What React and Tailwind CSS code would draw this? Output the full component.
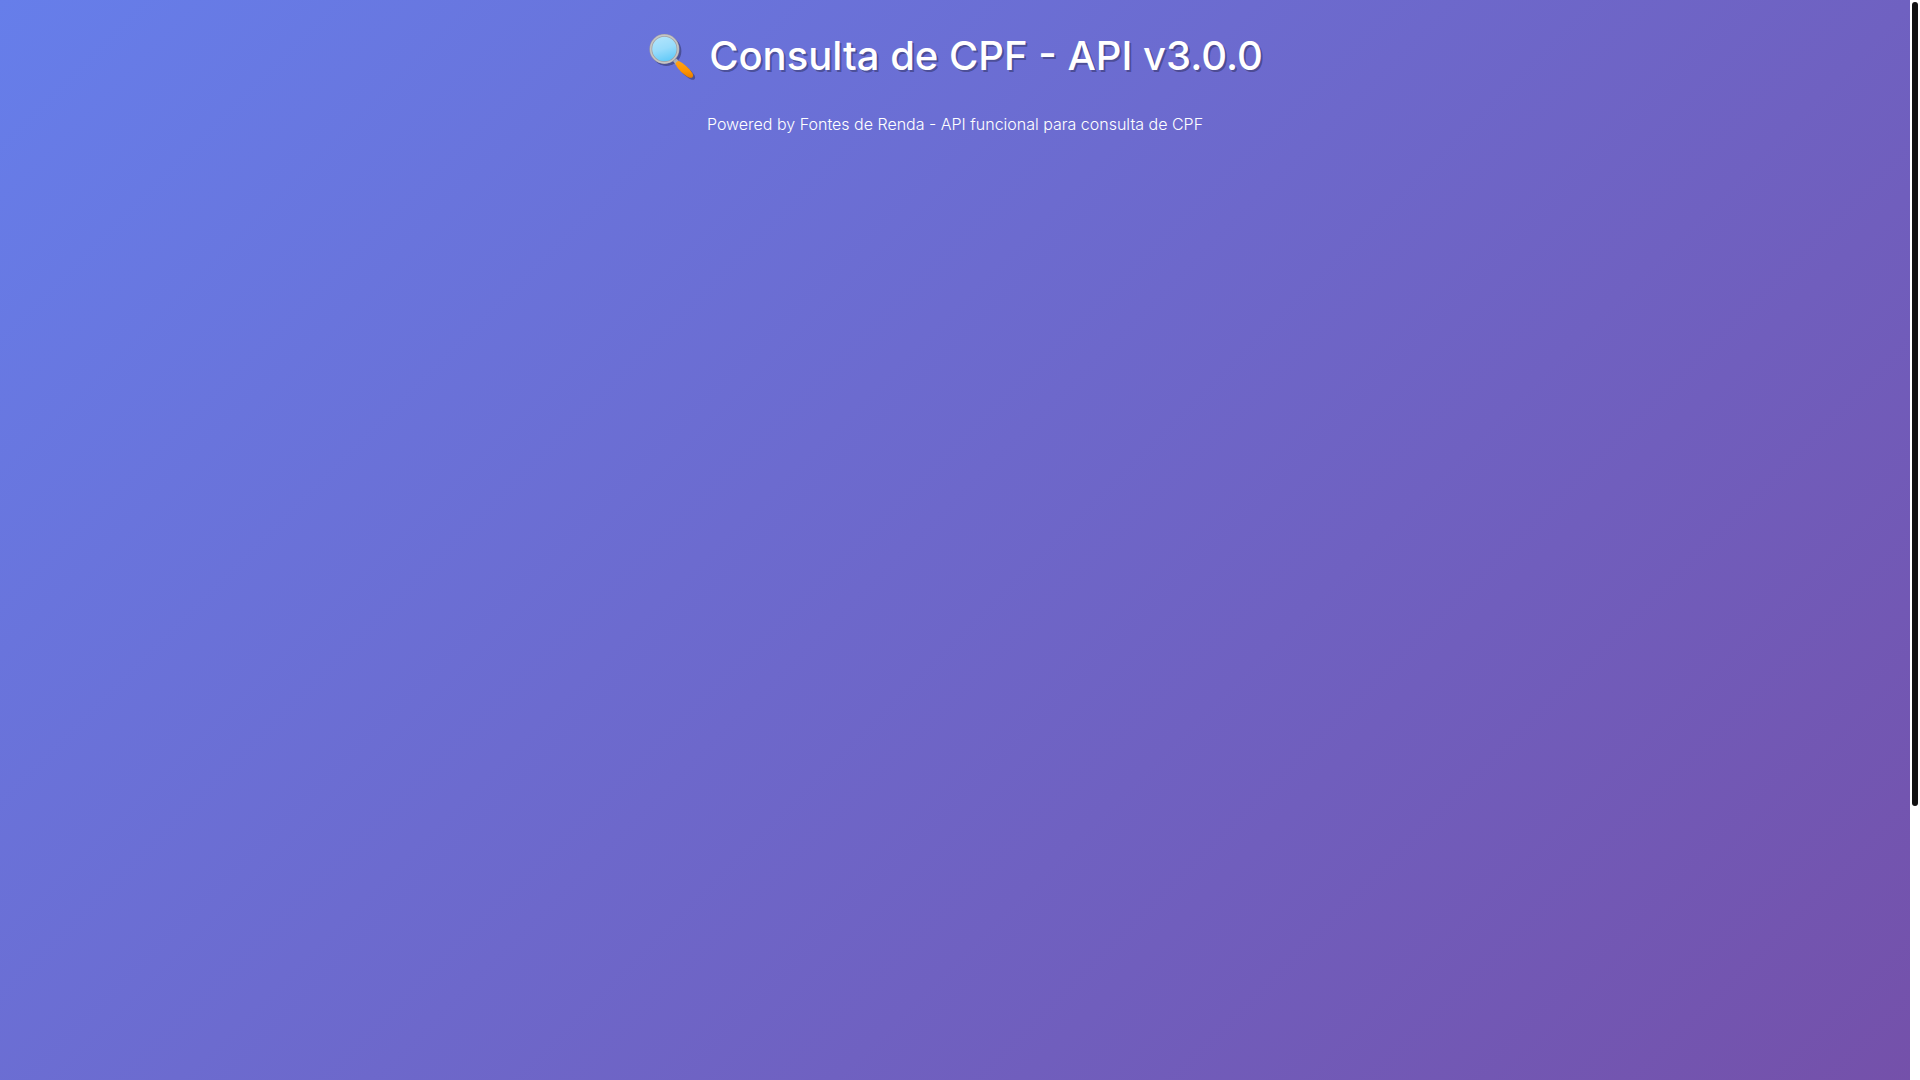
import React from 'react';

function MagnifierIcon() {
  return (
    <svg
      viewBox="0 0 50 48"
      className="h-12 w-[50px] shrink-0 [filter:drop-shadow(2px_2px_0_rgba(0,0,0,0.3))]"
      role="img"
      aria-label="Lupa"
    >
      <defs>
        <linearGradient id="glass" x1="0.3" y1="0" x2="0.6" y2="1">
          <stop offset="0" stopColor="#b3e5fc" />
          <stop offset="0.5" stopColor="#98dcfb" />
          <stop offset="1" stopColor="#5cc8f8" />
        </linearGradient>
        <linearGradient id="handle" x1="0" y1="0" x2="0" y2="1">
          <stop offset="0" stopColor="#ffa31a" />
          <stop offset="0.6" stopColor="#ff9400" />
          <stop offset="1" stopColor="#e57c00" />
        </linearGradient>
      </defs>
      {/* neck */}
      <path d="M26 29 L29.5 26.5 L33 30.5 L29 33 Z" fill="#b0b0b0" />
      {/* handle */}
      <path
        d="M28.6 32.2 C28.2 30.8 30.5 28.6 32 29 C36 31 42.5 36.5 45.4 41.2 C47.2 44.3 45.2 46.8 42 45.4 C36.6 43 31 37.4 28.6 32.2 Z"
        fill="url(#handle)"
      />
      {/* lens */}
      <circle cx="17.4" cy="17" r="13.6" fill="url(#glass)" stroke="#a3a3a3" strokeWidth="2.8" />
      <circle cx="17.4" cy="17" r="13.7" fill="none" stroke="#c6c6c6" strokeWidth="1.4" />
    </svg>
  );
}

function ScrollTrack() {
  return (
    <div className="w-[10px] shrink-0 bg-white px-0.5 pt-0.5" aria-hidden="true">
      <div className="h-[74.6%] w-1.5 rounded-full bg-[#111111]" />
    </div>
  );
}

export default function App() {
  return (
    <div className="flex h-screen overflow-hidden font-['Inter',sans-serif]">
      <main className="min-w-0 flex-1 overflow-hidden">
        <div className="min-h-[134vh] bg-[linear-gradient(135deg,#667eea_0%,#764ba2_100%)] p-5">
          <header className="mx-auto max-w-6xl text-center text-white">
            <h1 className="mb-5 flex items-center justify-center gap-3 text-[40px] leading-[72px] font-medium [text-shadow:2px_2px_0_rgba(0,0,0,0.3)]">
              <MagnifierIcon />
              Consulta de CPF - API v3.0.0
            </h1>
            <p className="text-base font-light">
              Powered by Fontes de Renda - API funcional para consulta de CPF
            </p>
          </header>
        </div>
      </main>
      <ScrollTrack />
    </div>
  );
}
